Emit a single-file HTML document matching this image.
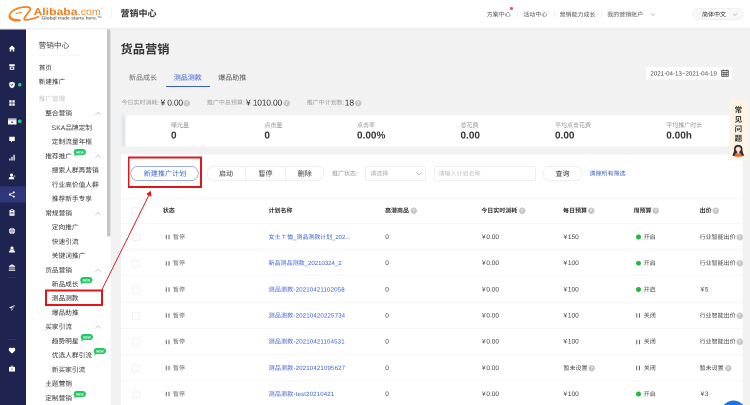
<!DOCTYPE html>
<html lang="zh-CN"><head><meta charset="utf-8"><title>营销中心 - 货品营销</title>
<style>
html,body{margin:0;padding:0;}
body{width:750px;height:405px;overflow:hidden;background:#f2f2f2;font-family:"Liberation Sans","Noto Sans CJK SC",sans-serif;text-rendering:geometricPrecision;}
#root{position:absolute;left:0;top:0;width:1500px;height:810px;transform:scale(.5);transform-origin:0 0;overflow:hidden;background:#f2f2f2;will-change:transform;}
.t{position:absolute;white-space:nowrap;line-height:20px;}
.abs{position:absolute;}
.info{position:absolute;border-radius:50%;background:#c6c6c6;color:#f4f4f4;text-align:center;font-weight:700;font-family:"Liberation Sans",sans-serif;}
.new{position:absolute;}
.pill{position:absolute;box-sizing:border-box;border:1px solid #dedede;border-radius:16px;background:#fff;}
.cb{position:absolute;box-sizing:border-box;width:15px;height:15px;border:1px solid #e4e4e4;border-radius:2px;background:#fff;}
.rowline{position:absolute;left:242px;width:1243px;height:1px;background:#eeeeee;}
</style></head><body><div id="root">

<div class="abs" style="left:0;top:0;width:1500px;height:57.200px;background:#fff;border-bottom:1.800px solid #dedede;"></div>
<svg class="abs" style="left:0;top:0" width="220" height="58" viewBox="0 0 220 58">
<g fill="none" stroke="#f58220" stroke-linecap="round" stroke-linejoin="round">
<path d="M40 40.500 C30 42.500 18.500 40 19 31.500 C19.500 23 34 14.500 51 14 C58 13.800 62 15.500 60.500 19 C58 25 51 31 48.500 36.500 C47 40 52 40.500 58 39.200 C66 37.500 72 35.500 77 33.500" stroke-width="3.400"/>
<path d="M19.500 33 C20.500 38 27 40.800 36 40.300" stroke-width="5"/>
<path d="M32 27 C35.500 26 39 25.500 42.500 24.800" stroke-width="2.200"/>
</g>
<text x="67" y="30" font-family="Liberation Sans, sans-serif" font-weight="700" font-size="20" fill="#f47b20" textLength="88" lengthAdjust="spacingAndGlyphs">Alibaba</text>
<text x="155.500" y="30" font-family="Liberation Sans, sans-serif" font-weight="400" font-size="20" fill="#f58a2c" textLength="46" lengthAdjust="spacingAndGlyphs">.com</text>
<text x="202" y="19" font-family="Liberation Sans, sans-serif" font-size="5" fill="#f58a2c">®</text>
<text x="83" y="39" font-family="Liberation Sans, sans-serif" font-weight="700" font-size="9" fill="#6b6b6b" textLength="121" lengthAdjust="spacingAndGlyphs">Global trade starts here.™</text>
</svg>
<div class="abs" style="left:222px;top:15px;width:1px;height:21px;background:#e6e6e6"></div>
<span class="t " style="left:241.0px;top:17.0px;font-size:18px;color:#333;font-weight:700;">营销中心</span>
<span class="t " style="left:973.6px;top:19.0px;font-size:12px;color:#555;font-weight:400;">方案中心</span>
<div class="abs" style="left:1020px;top:14px;width:5.600px;height:5.600px;border-radius:50%;background:#ec4a62"></div>
<span class="t " style="left:1046.8px;top:19.0px;font-size:12px;color:#555;font-weight:400;">活动中心</span>
<span class="t " style="left:1119.0px;top:19.0px;font-size:12px;color:#555;font-weight:400;">营销能力成长</span>
<span class="t " style="left:1214.6px;top:19.0px;font-size:12px;color:#555;font-weight:400;">我的营销账户</span>
<div class="abs" style="left:1034.8px;top:22px;width:1px;height:13px;background:#dcdcdc"></div>
<div class="abs" style="left:1108px;top:22px;width:1px;height:13px;background:#dcdcdc"></div>
<div class="abs" style="left:1203.4px;top:22px;width:1px;height:13px;background:#dcdcdc"></div>
<svg class="abs" style="left:1300px;top:25px" width="12" height="8" viewBox="0 0 12 8"><path d="M2 2 L6 6 L10 2" fill="none" stroke="#b5b5b5" stroke-width="1.3"/></svg>
<div class="pill" style="left:1384px;top:15.500px;width:103px;height:24.500px;background:#f8f8f8;border-color:#e9e9e9"></div>
<span class="t " style="left:1404.0px;top:19.0px;font-size:12px;color:#333;font-weight:400;">简体中文</span>
<svg class="abs" style="left:1464px;top:25px" width="12" height="8" viewBox="0 0 12 8"><path d="M2 2 L6 6 L10 2" fill="none" stroke="#b5b5b5" stroke-width="1.3"/></svg>
<div class="abs" style="left:0;top:59px;width:52px;height:751px;background:#1f2350"></div>
<div class="abs" style="left:0;top:373px;width:52px;height:32px;background:#30367a"></div>
<svg class="abs" style="left:17.4px;top:90.0px" width="14" height="14" viewBox="0 0 14 14" preserveAspectRatio="none" fill="#fff"><path d="M7 1 L13.500 7 H11.500 V13 H8.500 V9 H5.500 V13 H2.500 V7 H0.500 Z"/></svg>
<svg class="abs" style="left:17.4px;top:127.0px" width="14" height="14" viewBox="0 0 14 14" preserveAspectRatio="none" fill="#fff"><path d="M1.500 1.500 H12.500 V5 H1.500 Z M2.500 6 H11.500 V12.500 H2.500 Z M4.500 8 V10.500 H9.500 V8 Z" fill-rule="evenodd"/></svg>
<svg class="abs" style="left:17.4px;top:163.0px" width="14" height="14" viewBox="0 0 14 14" preserveAspectRatio="none" fill="#fff"><path d="M7 0.500 L12.500 2.500 V7 C12.500 10.500 9.500 12.500 7 13.500 C4.500 12.500 1.500 10.500 1.500 7 V2.500 Z M4 6.500 L6.300 9 L10 5 L9 4 L6.300 7 L5 5.600 Z" fill-rule="evenodd"/></svg>
<svg class="abs" style="left:17.4px;top:199.0px" width="14" height="14" viewBox="0 0 14 14" preserveAspectRatio="none" fill="#fff"><path d="M1.500 1.500 H6.300 V6.300 H1.500 Z M7.700 1.500 H12.500 V6.300 H7.700 Z M1.500 7.700 H6.300 V12.500 H1.500 Z M7.700 7.700 H12.500 V12.500 H7.700 Z"/></svg>
<svg class="abs" style="left:15.899999999999999px;top:236.0px" width="17" height="14" viewBox="0 0 14 14" preserveAspectRatio="none" fill="#fff"><path d="M0 1 H14 V13 H0 Z"/><path d="M0 3.800 H14" stroke="#1f2350" stroke-width="0.900" fill="none"/><path d="M5.800 6.300 L9.300 8.400 L5.800 10.500 Z" fill="#1f2350"/></svg>
<svg class="abs" style="left:17.4px;top:271.6px" width="14" height="14" viewBox="0 0 14 14" preserveAspectRatio="none" fill="#fff"><path d="M1.500 1.500 H12.500 V10 H8 L5 13 V10 H1.500 Z"/></svg>
<svg class="abs" style="left:17.4px;top:308.0px" width="14" height="14" viewBox="0 0 14 14" preserveAspectRatio="none" fill="#fff"><path d="M1.500 9 H4 V13 H1.500 Z M5.700 5.500 H8.200 V13 H5.700 Z M10 1.500 H12.500 V13 H10 Z"/></svg>
<svg class="abs" style="left:17.4px;top:345.6px" width="14" height="14" viewBox="0 0 14 14" preserveAspectRatio="none" fill="#fff"><circle cx="6" cy="4" r="3"/><path d="M0.500 12.500 C0.500 8.500 3 7.500 6 7.500 C9 7.500 11.500 8.500 11.500 12.500 Z"/><path d="M10 5.500 H13.500 V7 H10 Z"/></svg>
<svg class="abs" style="left:17.4px;top:382.0px" width="14" height="14" viewBox="0 0 14 14" preserveAspectRatio="none" fill="#fff"><circle cx="3" cy="7" r="2.200"/><circle cx="10.500" cy="2.800" r="2"/><circle cx="10.500" cy="11.200" r="2"/><path d="M3 7 L10.500 2.800 M3 7 L10.500 11.200" stroke="#fff" stroke-width="1.300" fill="none"/></svg>
<svg class="abs" style="left:17.4px;top:418.2px" width="14" height="14" viewBox="0 0 14 14" preserveAspectRatio="none" fill="#fff"><path d="M2 2 H12 V13.500 H2 Z M4.500 0.500 H9.500 V3.500 H4.500 Z M4 6 H10 V7.200 H4 Z M4 9 H10 V10.200 H4 Z" fill-rule="evenodd"/></svg>
<svg class="abs" style="left:17.4px;top:455.0px" width="14" height="14" viewBox="0 0 14 14" preserveAspectRatio="none" fill="#fff"><circle cx="7" cy="7" r="6.200"/><path d="M1 7 H13 M7 1 C4 4 4 10 7 13 C10 10 10 4 7 1" stroke="#1f2350" stroke-width="0.900" fill="none"/></svg>
<svg class="abs" style="left:17.4px;top:492.0px" width="14" height="14" viewBox="0 0 14 14" preserveAspectRatio="none" fill="#fff"><circle cx="7" cy="4" r="3"/><path d="M1 13 C1 9 3.500 8 7 8 C10.500 8 13 9 13 13 Z"/><path d="M2.500 6 H11.500 V7.200 H2.500 Z"/></svg>
<svg class="abs" style="left:17.4px;top:528.0px" width="14" height="14" viewBox="0 0 14 14" preserveAspectRatio="none" fill="#fff"><path d="M7 0.500 L13.500 4.500 V5.500 H0.500 V4.500 Z M2 6.500 H4 V11 H2 Z M6 6.500 H8 V11 H6 Z M10 6.500 H12 V11 H10 Z M0.500 11.800 H13.500 V13.500 H0.500 Z"/></svg>
<svg class="abs" style="left:17.4px;top:609.0px" width="14" height="14" viewBox="0 0 14 14" preserveAspectRatio="none" fill="#fff"><path d="M13 1 L1 6 L5 8 L6.500 13 L8.500 9.500 Z M12 2 L5.500 7.600 L6.700 11 Z" fill-rule="evenodd"/></svg>
<svg class="abs" style="left:17.4px;top:694.0px" width="14" height="14" viewBox="0 0 14 14" preserveAspectRatio="none" fill="#fff"><path d="M7 13 C3 10 0.500 7.500 0.500 4.800 C0.500 2.500 2.300 1.200 4 1.200 C5.300 1.200 6.400 1.900 7 3 C7.600 1.900 8.700 1.200 10 1.200 C11.700 1.200 13.500 2.500 13.500 4.800 C13.500 7.500 11 10 7 13 Z"/></svg>
<svg class="abs" style="left:17.4px;top:730.0px" width="14" height="14" viewBox="0 0 14 14" preserveAspectRatio="none" fill="#fff"><path d="M1 4 H13 V13 H1 Z M4.500 1.500 H9.500 V4 H8.300 V2.700 H5.700 V4 H4.500 Z M6 7 H8 V9 H6 Z" fill-rule="evenodd"/></svg>
<div class="abs" style="left:35.700px;top:166.1px;width:7px;height:7px;border-radius:50%;background:#22cf8a"></div>
<div class="abs" style="left:35.700px;top:239.1px;width:7px;height:7px;border-radius:50%;background:#22cf8a"></div>
<div class="abs" style="left:15px;top:554px;width:18px;height:1px;background:#3b4073"></div>
<div class="abs" style="left:15px;top:679px;width:18px;height:1px;background:#3b4073"></div>
<div class="abs" style="left:52px;top:59px;width:161.500px;height:751px;background:#fff"></div>
<div class="abs" style="left:213.500px;top:59px;width:8px;height:751px;background:#fdfdfd"></div>
<div class="abs" style="left:213.500px;top:59px;width:7px;height:413.500px;background:#c6c6c6"></div>
<span class="t " style="left:77.0px;top:82.0px;font-size:15.4px;color:#444;font-weight:400;">营销中心</span>
<div class="abs" style="left:77px;top:110.500px;width:81px;height:1px;background:#f1f1f1"></div>
<span class="t " style="left:77.6px;top:126.4px;font-size:13.2px;color:#333;font-weight:400;">首页</span>
<span class="t " style="left:77.6px;top:154.4px;font-size:13.2px;color:#333;font-weight:400;">新建推广</span>
<span class="t " style="left:77.6px;top:188.4px;font-size:13.2px;color:#c8c8c8;font-weight:400;">推广管理</span>
<span class="t " style="left:90.4px;top:217.4px;font-size:13.4px;color:#333;font-weight:400;">整合营销</span>
<svg class="abs" style="left:189px;top:223.4px" width="14" height="8" viewBox="0 0 14 8"><path d="M1.500 7 L7 1.500 L12.500 7" fill="none" stroke="#c4c4c4" stroke-width="1.300"/></svg>
<span class="t " style="left:103.6px;top:245.9px;font-size:13.4px;color:#333;font-weight:400;">SKA品牌定制</span>
<span class="t " style="left:103.6px;top:274.3px;font-size:13.4px;color:#333;font-weight:400;">定制流量年框</span>
<span class="t " style="left:90.4px;top:302.8px;font-size:13.4px;color:#333;font-weight:400;">推荐推广</span>
<svg class="abs" style="left:189px;top:308.8px" width="14" height="8" viewBox="0 0 14 8"><path d="M1.500 7 L7 1.500 L12.500 7" fill="none" stroke="#c4c4c4" stroke-width="1.300"/></svg>
<svg class="new" style="left:146.5px;top:297.8px" width="25" height="15" viewBox="0 0 25 15"><path d="M6 0 H19 A6 6 0 0 1 19 12 H6 L1 15 L2.500 10.500 A6 6 0 0 1 6 0 Z" fill="#21c765"/><text x="12.800" y="8.600" font-family="Liberation Sans, sans-serif" font-weight="700" font-size="6.500" fill="#fff" text-anchor="middle">NEW</text></svg>
<span class="t " style="left:103.6px;top:331.2px;font-size:13.4px;color:#333;font-weight:400;">搜索人群再营销</span>
<span class="t " style="left:103.6px;top:359.7px;font-size:13.4px;color:#333;font-weight:400;">行业高价值人群</span>
<span class="t " style="left:103.6px;top:388.2px;font-size:13.4px;color:#333;font-weight:400;">推荐新手专享</span>
<span class="t " style="left:90.4px;top:416.6px;font-size:13.4px;color:#333;font-weight:400;">常规营销</span>
<svg class="abs" style="left:189px;top:422.6px" width="14" height="8" viewBox="0 0 14 8"><path d="M1.500 7 L7 1.500 L12.500 7" fill="none" stroke="#c4c4c4" stroke-width="1.300"/></svg>
<span class="t " style="left:103.6px;top:445.1px;font-size:13.4px;color:#333;font-weight:400;">定向推广</span>
<span class="t " style="left:103.6px;top:473.5px;font-size:13.4px;color:#333;font-weight:400;">快速引流</span>
<span class="t " style="left:103.6px;top:502.0px;font-size:13.4px;color:#333;font-weight:400;">关键词推广</span>
<span class="t " style="left:90.4px;top:530.5px;font-size:13.4px;color:#333;font-weight:400;">货品营销</span>
<svg class="abs" style="left:189px;top:536.5px" width="14" height="8" viewBox="0 0 14 8"><path d="M1.500 7 L7 1.500 L12.500 7" fill="none" stroke="#c4c4c4" stroke-width="1.300"/></svg>
<span class="t " style="left:103.6px;top:558.9px;font-size:13.4px;color:#333;font-weight:400;">新品成长</span>
<svg class="new" style="left:159.5px;top:553.9px" width="25" height="15" viewBox="0 0 25 15"><path d="M6 0 H19 A6 6 0 0 1 19 12 H6 L1 15 L2.500 10.500 A6 6 0 0 1 6 0 Z" fill="#21c765"/><text x="12.800" y="8.600" font-family="Liberation Sans, sans-serif" font-weight="700" font-size="6.500" fill="#fff" text-anchor="middle">NEW</text></svg>
<span class="t " style="left:103.6px;top:587.4px;font-size:13.4px;color:#222;font-weight:400;">测品测款</span>
<span class="t " style="left:103.6px;top:615.8px;font-size:13.4px;color:#333;font-weight:400;">爆品助推</span>
<span class="t " style="left:90.4px;top:644.3px;font-size:13.4px;color:#333;font-weight:400;">买家引流</span>
<svg class="abs" style="left:189px;top:650.3px" width="14" height="8" viewBox="0 0 14 8"><path d="M1.500 7 L7 1.500 L12.500 7" fill="none" stroke="#c4c4c4" stroke-width="1.300"/></svg>
<span class="t " style="left:103.6px;top:672.8px;font-size:13.4px;color:#333;font-weight:400;">趋势明星</span>
<svg class="new" style="left:161.1px;top:667.8px" width="25" height="15" viewBox="0 0 25 15"><path d="M6 0 H19 A6 6 0 0 1 19 12 H6 L1 15 L2.500 10.500 A6 6 0 0 1 6 0 Z" fill="#21c765"/><text x="12.800" y="8.600" font-family="Liberation Sans, sans-serif" font-weight="700" font-size="6.500" fill="#fff" text-anchor="middle">NEW</text></svg>
<span class="t " style="left:103.6px;top:701.2px;font-size:13.4px;color:#333;font-weight:400;">优选人群引流</span>
<svg class="new" style="left:186.5px;top:696.2px" width="25" height="15" viewBox="0 0 25 15"><path d="M6 0 H19 A6 6 0 0 1 19 12 H6 L1 15 L2.500 10.500 A6 6 0 0 1 6 0 Z" fill="#21c765"/><text x="12.800" y="8.600" font-family="Liberation Sans, sans-serif" font-weight="700" font-size="6.500" fill="#fff" text-anchor="middle">NEW</text></svg>
<span class="t " style="left:103.6px;top:729.7px;font-size:13.4px;color:#333;font-weight:400;">新买家引流</span>
<span class="t " style="left:90.4px;top:758.1px;font-size:13.4px;color:#333;font-weight:400;">主题营销</span>
<span class="t " style="left:90.4px;top:786.6px;font-size:13.4px;color:#333;font-weight:400;">定制营销</span>
<svg class="new" style="left:147.3px;top:781.6px" width="25" height="15" viewBox="0 0 25 15"><path d="M6 0 H19 A6 6 0 0 1 19 12 H6 L1 15 L2.500 10.500 A6 6 0 0 1 6 0 Z" fill="#21c765"/><text x="12.800" y="8.600" font-family="Liberation Sans, sans-serif" font-weight="700" font-size="6.500" fill="#fff" text-anchor="middle">NEW</text></svg>
<div class="abs" style="left:89.600px;top:578.500px;width:116.400px;height:33.300px;box-sizing:border-box;border:4.600px solid #e0161d"></div>
<span class="t " style="left:241.0px;top:89.6px;font-size:24.5px;color:#333;font-weight:700;line-height:30px;margin-top:-5px;">货品营销</span>
<span class="t " style="left:258.0px;top:144.6px;font-size:14px;color:#666;font-weight:400;">新品成长</span>
<span class="t " style="left:347.6px;top:144.6px;font-size:14px;color:#3b5ecd;font-weight:400;">测品测款</span>
<span class="t " style="left:436.6px;top:144.6px;font-size:14px;color:#555;font-weight:400;">爆品助推</span>
<div class="abs" style="left:331.600px;top:172px;width:88px;height:2px;background:#3b5ecd"></div>
<div class="abs" style="left:1292.600px;top:133.500px;width:170px;height:25.500px;background:#fff"></div>
<span class="t " style="left:1300.8px;top:136.6px;font-size:12.3px;color:#4a4a4a;font-weight:400;letter-spacing:0px;">2021-04-13~2021-04-19</span>
<svg class="abs" style="left:1442px;top:137.500px" width="16" height="16" viewBox="0 0 16 16" fill="none" stroke="#444" stroke-width="1.600"><rect x="1.500" y="3" width="13" height="11.500"/><path d="M1.500 6.500 H14.500 M5.800 6.500 V14.500 M10.200 6.500 V14.500 M1.500 10.500 H14.500 M4.500 1 V4.500 M11.500 1 V4.500"/></svg>
<span class="t " style="left:243.0px;top:195.0px;font-size:12px;color:#9a9a9a;font-weight:400;">今日实时消耗:</span>
<span class="t " style="left:321.0px;top:196.0px;font-size:17px;color:#333;font-weight:400;letter-spacing:-0.4px;">¥ 0.00</span>
<span class="info" style="left:367.0px;top:199.5px;width:13px;height:13px;font-size:9px;line-height:13.5px">?</span>
<span class="t " style="left:413.8px;top:195.0px;font-size:12px;color:#9a9a9a;font-weight:400;">推广中总预算:</span>
<span class="t " style="left:492.0px;top:196.0px;font-size:17px;color:#333;font-weight:400;letter-spacing:-0.4px;">¥ 1010.00</span>
<span class="info" style="left:566.5px;top:199.5px;width:13px;height:13px;font-size:9px;line-height:13.5px">?</span>
<span class="t " style="left:613.6px;top:195.0px;font-size:12px;color:#9a9a9a;font-weight:400;">推广中计划数:</span>
<span class="t " style="left:689.6px;top:196.0px;font-size:17px;color:#333;font-weight:400;letter-spacing:-0.4px;">18</span>
<span class="info" style="left:709.5px;top:199.5px;width:13px;height:13px;font-size:9px;line-height:13.5px">?</span>
<div class="abs" style="left:242.500px;top:231px;width:1242.500px;height:62px;background:#fff"></div>
<div class="abs" style="left:242.500px;top:231px;width:8.500px;height:62px;background:#e1e6f0"></div>
<span class="t " style="left:342.0px;top:240.0px;font-size:12px;color:#9a9a9a;font-weight:400;">曝光量</span>
<span class="t " style="left:342.0px;top:260.5px;font-size:20px;color:#333;font-weight:700;">0</span>
<span class="t " style="left:528.8px;top:240.0px;font-size:12px;color:#9a9a9a;font-weight:400;">点击量</span>
<span class="t " style="left:528.8px;top:260.5px;font-size:20px;color:#333;font-weight:700;">0</span>
<span class="t " style="left:714.0px;top:240.0px;font-size:12px;color:#9a9a9a;font-weight:400;">点击率</span>
<span class="t " style="left:714.0px;top:260.5px;font-size:20px;color:#333;font-weight:700;">0.00%</span>
<span class="t " style="left:921.0px;top:240.0px;font-size:12px;color:#9a9a9a;font-weight:400;">总花费</span>
<span class="t " style="left:921.0px;top:260.5px;font-size:20px;color:#333;font-weight:700;">0.00</span>
<span class="t " style="left:1110.0px;top:240.0px;font-size:12px;color:#9a9a9a;font-weight:400;">平均点击花费</span>
<span class="t " style="left:1110.0px;top:260.5px;font-size:20px;color:#333;font-weight:700;">0.00</span>
<span class="t " style="left:1332.6px;top:240.0px;font-size:12px;color:#9a9a9a;font-weight:400;">平均推广时长</span>
<span class="t " style="left:1332.6px;top:260.5px;font-size:20px;color:#333;font-weight:700;">0.00h</span>
<div class="abs" style="left:242px;top:309px;width:1243px;height:510px;background:#fff"></div>
<div class="abs" style="left:255px;top:312.500px;width:148.500px;height:63.800px;box-sizing:border-box;border:4.500px solid #e0161d"></div>
<div class="pill" style="left:261px;top:332px;width:136px;height:30px;border-color:#3b5ecd"></div>
<span class="t " style="left:287.4px;top:337.0px;font-size:14px;color:#3b5ecd;font-weight:400;letter-spacing:0.2px;">新建推广计划</span>
<div class="pill" style="left:413.600px;top:332px;width:234.400px;height:30px;"></div>
<div class="abs" style="left:491px;top:333px;width:1px;height:28px;background:#e2e2e2"></div>
<div class="abs" style="left:570px;top:333px;width:1px;height:28px;background:#e2e2e2"></div>
<span class="t " style="left:438.0px;top:337.0px;font-size:14px;color:#333;font-weight:400;">启动</span>
<span class="t " style="left:517.0px;top:337.0px;font-size:14px;color:#333;font-weight:400;">暂停</span>
<span class="t " style="left:595.6px;top:337.0px;font-size:14px;color:#333;font-weight:400;">删除</span>
<span class="t " style="left:664.0px;top:337.0px;font-size:12px;color:#9a9a9a;font-weight:400;">推广状态:</span>
<div class="abs" style="left:730.400px;top:332px;width:121px;height:30px;box-sizing:border-box;border:1px solid #e0e0e0;border-radius:3px;background:#fff"></div>
<span class="t " style="left:740.6px;top:337.0px;font-size:12px;color:#aaa;font-weight:400;">请选择</span>
<svg class="abs" style="left:831px;top:343px" width="14" height="9" viewBox="0 0 14 9"><path d="M1.500 1.500 L7 7 L12.500 1.500" fill="none" stroke="#b0b0b0" stroke-width="1.300"/></svg>
<div class="abs" style="left:868.600px;top:332px;width:202px;height:30px;box-sizing:border-box;border:1px solid #e0e0e0;border-radius:3px;background:#fff"></div>
<span class="t " style="left:877.0px;top:337.0px;font-size:12px;color:#bdbdbd;font-weight:400;">请输入计划名称</span>
<div class="pill" style="left:1085.400px;top:332px;width:79.400px;height:30px;"></div>
<span class="t " style="left:1111.0px;top:337.0px;font-size:14px;color:#333;font-weight:400;">查询</span>
<span class="t " style="left:1179.0px;top:337.0px;font-size:12px;color:#3b5ecd;font-weight:400;">清除所有筛选</span>
<div class="rowline" style="top:397px;background:#f0f0f0"></div>
<div class="cb" style="left:263.500px;top:414.3px"></div>
<span class="t " style="left:325.6px;top:410.8px;font-size:12px;color:#333;font-weight:700;">状态</span>
<span class="t " style="left:537.0px;top:410.8px;font-size:12px;color:#333;font-weight:700;">计划名称</span>
<span class="t " style="left:770.0px;top:410.8px;font-size:12px;color:#333;font-weight:700;">高潜商品</span>
<span class="info" style="left:820.5px;top:414.8px;width:13px;height:13px;font-size:9px;line-height:13.5px">?</span>
<span class="t " style="left:962.4px;top:410.8px;font-size:12px;color:#333;font-weight:700;">今日实时消耗</span>
<span class="info" style="left:1037.5px;top:414.8px;width:13px;height:13px;font-size:9px;line-height:13.5px">?</span>
<span class="t " style="left:1126.0px;top:410.8px;font-size:12px;color:#333;font-weight:700;">每日预算</span>
<span class="info" style="left:1175.5px;top:414.8px;width:13px;height:13px;font-size:9px;line-height:13.5px">?</span>
<span class="t " style="left:1267.0px;top:410.8px;font-size:12px;color:#333;font-weight:700;">周预算</span>
<span class="info" style="left:1305.0px;top:414.8px;width:13px;height:13px;font-size:9px;line-height:13.5px">?</span>
<span class="t " style="left:1399.2px;top:410.8px;font-size:12px;color:#333;font-weight:700;">出价</span>
<span class="info" style="left:1424.5px;top:414.8px;width:13px;height:13px;font-size:9px;line-height:13.5px">?</span>
<div class="rowline" style="top:446.6px"></div>
<div class="cb" style="left:263.500px;top:467.3px"></div>
<svg class="abs" style="left:331px;top:469.3px" width="9" height="10" viewBox="0 0 9 10"><path d="M1.500 0.500 V9.500 M7 0.500 V9.500" stroke="#555" stroke-width="1.800" fill="none"/></svg>
<span class="t " style="left:346.0px;top:463.8px;font-size:12px;color:#666;font-weight:400;">暂停</span>
<span class="t " style="left:537.0px;top:463.8px;font-size:12px;color:#3b5ecd;font-weight:400;letter-spacing:-0.1px;">女士 T 恤_测品测款计划_202...</span>
<span class="t " style="left:770.5px;top:463.8px;font-size:13px;color:#444;font-weight:400;">0</span>
<span class="t " style="left:964.0px;top:463.8px;font-size:13px;color:#444;font-weight:400;"><span style="letter-spacing:1.5px">¥</span>0.00</span>
<span class="t " style="left:1127.0px;top:463.8px;font-size:13px;color:#444;font-weight:400;"><span style="letter-spacing:1.5px">¥</span>150</span>
<div class="abs" style="left:1272px;top:469.3px;width:9.500px;height:9.500px;border-radius:50%;background:#23b93c"></div>
<span class="t " style="left:1287.4px;top:463.8px;font-size:12px;color:#444;font-weight:400;">开启</span>
<span class="t " style="left:1399.2px;top:463.8px;font-size:12px;color:#444;font-weight:400;">行业智能出价</span>
<span class="info" style="left:1472.6px;top:467.8px;width:13px;height:13px;font-size:9px;line-height:13.5px">?</span>
<div class="rowline" style="top:498.9px"></div>
<div class="cb" style="left:263.500px;top:519.6px"></div>
<svg class="abs" style="left:331px;top:521.6400000000001px" width="9" height="10" viewBox="0 0 9 10"><path d="M1.500 0.500 V9.500 M7 0.500 V9.500" stroke="#555" stroke-width="1.800" fill="none"/></svg>
<span class="t " style="left:346.0px;top:516.1px;font-size:12px;color:#666;font-weight:400;">暂停</span>
<span class="t " style="left:537.0px;top:516.1px;font-size:12px;color:#3b5ecd;font-weight:400;letter-spacing:0.05px;">新品测品测款_20210324_2</span>
<span class="t " style="left:770.5px;top:516.1px;font-size:13px;color:#444;font-weight:400;">0</span>
<span class="t " style="left:964.0px;top:516.1px;font-size:13px;color:#444;font-weight:400;"><span style="letter-spacing:1.5px">¥</span>0.00</span>
<span class="t " style="left:1127.0px;top:516.1px;font-size:13px;color:#444;font-weight:400;"><span style="letter-spacing:1.5px">¥</span>100</span>
<div class="abs" style="left:1272px;top:521.6px;width:9.500px;height:9.500px;border-radius:50%;background:#23b93c"></div>
<span class="t " style="left:1287.4px;top:516.1px;font-size:12px;color:#444;font-weight:400;">开启</span>
<span class="t " style="left:1399.2px;top:516.1px;font-size:12px;color:#444;font-weight:400;">行业智能出价</span>
<span class="info" style="left:1472.6px;top:520.1px;width:13px;height:13px;font-size:9px;line-height:13.5px">?</span>
<div class="rowline" style="top:551.3px"></div>
<div class="cb" style="left:263.500px;top:572.0px"></div>
<svg class="abs" style="left:331px;top:573.98px" width="9" height="10" viewBox="0 0 9 10"><path d="M1.500 0.500 V9.500 M7 0.500 V9.500" stroke="#555" stroke-width="1.800" fill="none"/></svg>
<span class="t " style="left:346.0px;top:568.5px;font-size:12px;color:#666;font-weight:400;">暂停</span>
<span class="t " style="left:537.0px;top:568.5px;font-size:12.2px;color:#3b5ecd;font-weight:400;letter-spacing:0.3px;">测品测款-20210421102058</span>
<span class="t " style="left:770.5px;top:568.5px;font-size:13px;color:#444;font-weight:400;">0</span>
<span class="t " style="left:964.0px;top:568.5px;font-size:13px;color:#444;font-weight:400;"><span style="letter-spacing:1.5px">¥</span>0.00</span>
<span class="t " style="left:1127.0px;top:568.5px;font-size:13px;color:#444;font-weight:400;"><span style="letter-spacing:1.5px">¥</span>100</span>
<div class="abs" style="left:1272px;top:574.0px;width:9.500px;height:9.500px;border-radius:50%;background:#23b93c"></div>
<span class="t " style="left:1287.4px;top:568.5px;font-size:12px;color:#444;font-weight:400;">开启</span>
<span class="t " style="left:1401.0px;top:568.5px;font-size:13px;color:#444;font-weight:400;"><span style="letter-spacing:1.5px">¥</span>5</span>
<div class="rowline" style="top:603.6px"></div>
<div class="cb" style="left:263.500px;top:624.3px"></div>
<svg class="abs" style="left:331px;top:626.32px" width="9" height="10" viewBox="0 0 9 10"><path d="M1.500 0.500 V9.500 M7 0.500 V9.500" stroke="#555" stroke-width="1.800" fill="none"/></svg>
<span class="t " style="left:346.0px;top:620.8px;font-size:12px;color:#666;font-weight:400;">暂停</span>
<span class="t " style="left:537.0px;top:620.8px;font-size:12.2px;color:#3b5ecd;font-weight:400;letter-spacing:0.3px;">测品测款-20210420225734</span>
<span class="t " style="left:770.5px;top:620.8px;font-size:13px;color:#444;font-weight:400;">0</span>
<span class="t " style="left:964.0px;top:620.8px;font-size:13px;color:#444;font-weight:400;"><span style="letter-spacing:1.5px">¥</span>0.00</span>
<span class="t " style="left:1127.0px;top:620.8px;font-size:13px;color:#444;font-weight:400;"><span style="letter-spacing:1.5px">¥</span>100</span>
<svg class="abs" style="left:1272px;top:626.32px" width="9" height="10" viewBox="0 0 9 10"><path d="M1.500 0.500 V9.500 M7 0.500 V9.500" stroke="#555" stroke-width="1.800" fill="none"/></svg>
<span class="t " style="left:1287.4px;top:620.8px;font-size:12px;color:#444;font-weight:400;">关闭</span>
<span class="t " style="left:1399.2px;top:620.8px;font-size:12px;color:#444;font-weight:400;">行业智能出价</span>
<span class="info" style="left:1472.6px;top:624.8px;width:13px;height:13px;font-size:9px;line-height:13.5px">?</span>
<div class="rowline" style="top:656.0px"></div>
<div class="cb" style="left:263.500px;top:676.7px"></div>
<svg class="abs" style="left:331px;top:678.6600000000001px" width="9" height="10" viewBox="0 0 9 10"><path d="M1.500 0.500 V9.500 M7 0.500 V9.500" stroke="#555" stroke-width="1.800" fill="none"/></svg>
<span class="t " style="left:346.0px;top:673.2px;font-size:12px;color:#666;font-weight:400;">暂停</span>
<span class="t " style="left:537.0px;top:673.2px;font-size:12.2px;color:#3b5ecd;font-weight:400;letter-spacing:0.3px;">测品测款-20210421104531</span>
<span class="t " style="left:770.5px;top:673.2px;font-size:13px;color:#444;font-weight:400;">0</span>
<span class="t " style="left:964.0px;top:673.2px;font-size:13px;color:#444;font-weight:400;"><span style="letter-spacing:1.5px">¥</span>0.00</span>
<span class="t " style="left:1127.0px;top:673.2px;font-size:13px;color:#444;font-weight:400;"><span style="letter-spacing:1.5px">¥</span>100</span>
<svg class="abs" style="left:1272px;top:678.6600000000001px" width="9" height="10" viewBox="0 0 9 10"><path d="M1.500 0.500 V9.500 M7 0.500 V9.500" stroke="#555" stroke-width="1.800" fill="none"/></svg>
<span class="t " style="left:1287.4px;top:673.2px;font-size:12px;color:#444;font-weight:400;">关闭</span>
<span class="t " style="left:1399.2px;top:673.2px;font-size:12px;color:#444;font-weight:400;">行业智能出价</span>
<span class="info" style="left:1472.6px;top:677.2px;width:13px;height:13px;font-size:9px;line-height:13.5px">?</span>
<div class="rowline" style="top:708.3px"></div>
<div class="cb" style="left:263.500px;top:729.0px"></div>
<svg class="abs" style="left:331px;top:731.0000000000001px" width="9" height="10" viewBox="0 0 9 10"><path d="M1.500 0.500 V9.500 M7 0.500 V9.500" stroke="#555" stroke-width="1.800" fill="none"/></svg>
<span class="t " style="left:346.0px;top:725.5px;font-size:12px;color:#666;font-weight:400;">暂停</span>
<span class="t " style="left:537.0px;top:725.5px;font-size:12.2px;color:#3b5ecd;font-weight:400;letter-spacing:0.3px;">测品测款-20210421095627</span>
<span class="t " style="left:770.5px;top:725.5px;font-size:13px;color:#444;font-weight:400;">0</span>
<span class="t " style="left:964.0px;top:725.5px;font-size:13px;color:#444;font-weight:400;"><span style="letter-spacing:1.5px">¥</span>0.00</span>
<span class="t " style="left:1127.0px;top:725.5px;font-size:12px;color:#444;font-weight:400;">暂未设置</span>
<span class="info" style="left:1177.0px;top:729.5px;width:13px;height:13px;font-size:9px;line-height:13.5px">?</span>
<svg class="abs" style="left:1272px;top:731.0000000000001px" width="9" height="10" viewBox="0 0 9 10"><path d="M1.500 0.500 V9.500 M7 0.500 V9.500" stroke="#555" stroke-width="1.800" fill="none"/></svg>
<span class="t " style="left:1287.4px;top:725.5px;font-size:12px;color:#444;font-weight:400;">关闭</span>
<span class="t " style="left:1399.2px;top:725.5px;font-size:12px;color:#444;font-weight:400;">暂未设置</span>
<span class="info" style="left:1449.5px;top:729.5px;width:13px;height:13px;font-size:9px;line-height:13.5px">?</span>
<div class="rowline" style="top:760.6px"></div>
<div class="cb" style="left:263.500px;top:781.3px"></div>
<svg class="abs" style="left:331px;top:783.3400000000001px" width="9" height="10" viewBox="0 0 9 10"><path d="M1.500 0.500 V9.500 M7 0.500 V9.500" stroke="#555" stroke-width="1.800" fill="none"/></svg>
<span class="t " style="left:346.0px;top:777.8px;font-size:12px;color:#666;font-weight:400;">暂停</span>
<span class="t " style="left:537.0px;top:777.8px;font-size:12.2px;color:#3b5ecd;font-weight:400;letter-spacing:0.3px;">测品测款-test20210421</span>
<span class="t " style="left:770.5px;top:777.8px;font-size:13px;color:#444;font-weight:400;">0</span>
<span class="t " style="left:964.0px;top:777.8px;font-size:13px;color:#444;font-weight:400;"><span style="letter-spacing:1.5px">¥</span>0.00</span>
<span class="t " style="left:1127.0px;top:777.8px;font-size:13px;color:#444;font-weight:400;"><span style="letter-spacing:1.5px">¥</span>100</span>
<div class="abs" style="left:1272px;top:783.3px;width:9.500px;height:9.500px;border-radius:50%;background:#23b93c"></div>
<span class="t " style="left:1287.4px;top:777.8px;font-size:12px;color:#444;font-weight:400;">开启</span>
<span class="t " style="left:1401.0px;top:777.8px;font-size:13px;color:#444;font-weight:400;"><span style="letter-spacing:1.5px">¥</span>3</span>
<div class="rowline" style="top:813.0px"></div>
<svg class="abs" style="left:0;top:0" width="1500" height="810" viewBox="0 0 1500 810"><path d="M204 579 L299 388" stroke="#e0161d" stroke-width="1.700" fill="none"/><path d="M301.500 381.500 L303 393.500 L292.500 388.300 Z" fill="#e0161d"/></svg>
<div class="abs" style="left:1458.500px;top:200px;width:35px;height:121px;background:#fdf4e4;border-radius:4px"></div>
<span class="t " style="left:1469.3px;top:211.0px;font-size:15px;color:#333;font-weight:700;">常</span>
<span class="t " style="left:1469.3px;top:230.0px;font-size:15px;color:#333;font-weight:700;">见</span>
<span class="t " style="left:1469.3px;top:249.0px;font-size:15px;color:#333;font-weight:700;">问</span>
<span class="t " style="left:1469.3px;top:268.0px;font-size:15px;color:#333;font-weight:700;">题</span>
<svg class="abs" style="left:1463px;top:287.500px" width="27" height="26.500" viewBox="0 0 26 30" preserveAspectRatio="none">
<path d="M13 2 C5.500 2 4.500 9 5 14 C5.200 18 2.500 22 2 27 H24 C23.500 22 20.800 18 21 14 C21.500 9 20.500 2 13 2 Z" fill="#2b2b35"/>
<ellipse cx="13" cy="11.500" rx="5" ry="6" fill="#fde3d2"/>
<path d="M8 9 C10 6.500 15 6 18 9 C17.500 5 8.500 5 8 9 Z" fill="#2b2b35"/>
<path d="M6 29 C6 22 9 19.500 13 19.500 C17 19.500 20 22 20 29 Z" fill="#f26a21"/>
<path d="M11 17 H15 V20.500 L13 22 L11 20.500 Z" fill="#fde3d2"/>
</svg>
<div class="abs" style="left:1442px;top:801px;width:50px;height:50px;border-radius:50%;background:#1a73e8"></div>
</div></body></html>
